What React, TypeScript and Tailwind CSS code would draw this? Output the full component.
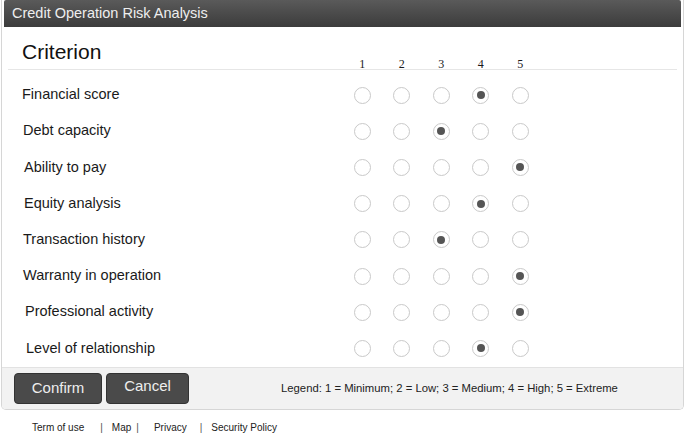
import React from 'react';

const criteria: { label: string; value: number; indent: string }[] = [
    { label: 'Financial score', value: 4, indent: 'pl-[14px]' },
    { label: 'Debt capacity', value: 3, indent: 'pl-[15px]' },
    { label: 'Ability to pay', value: 5, indent: 'pl-[16px]' },
    { label: 'Equity analysis', value: 4, indent: 'pl-[16px]' },
    { label: 'Transaction history', value: 3, indent: 'pl-[15px]' },
    { label: 'Warranty in operation', value: 5, indent: 'pl-[15px]' },
    { label: 'Professional activity', value: 5, indent: 'pl-[17px]' },
    { label: 'Level of relationship', value: 4, indent: 'pl-[18px]' },
];

const cols = [1, 2, 3, 4, 5];

function Radio({ checked }: { checked: boolean }) {
    return (
        <span className="w-[17px] h-[17px] rounded-full border border-[#c9c9c9] bg-white flex items-center justify-center">
            {checked && <span className="w-[8px] h-[8px] rounded-full bg-[#555]" />}
        </span>
    );
}

export default function App() {
    return (
        <div className="w-[685px] h-[434px] bg-white font-['Liberation_Sans',Arial,sans-serif] text-[#1a1a1a]">
            <div className="mx-[1px] border-x border-b border-[#d6d6d6] rounded-b-[5px] overflow-hidden">
                <div className="mx-[2px] h-[27px] bg-gradient-to-b from-[#5a5a5a] to-[#3c3c3c] rounded-t-[2px] flex items-center pl-[8px] text-[14.5px] text-[#eee]">
                    Credit Operation Risk Analysis
                </div>
                <div className="flex items-end h-[43px] mx-[6px] border-b border-[#e6e6e6]">
                    <div className="text-[21px] pl-[14px] pb-[2px] text-[#111]">Criterion</div>
                    <div className="ml-auto mr-[137px] flex leading-none -mb-[1px] font-['Liberation_Serif',serif] text-[12px]">
                        {cols.map((c) => (
                            <span key={c} className="w-[39.5px] text-center">
                                {c}
                            </span>
                        ))}
                    </div>
                </div>
                <div className="pt-[7px] flex flex-col">
                    {criteria.map((row) => (
                        <div key={row.label} className="h-[36.2px] flex items-center mx-[6px]">
                            <div className={`flex-1 text-[14.5px] ${row.indent}`}>{row.label}</div>
                            <div className="flex mr-[137px]">
                                {cols.map((c) => (
                                    <span key={c} className="w-[39.5px] flex justify-center">
                                        <Radio checked={row.value === c} />
                                    </span>
                                ))}
                            </div>
                        </div>
                    ))}
                </div>
                <div className="h-[42px] bg-[#f2f2f2] border-t border-[#e2e2e2] flex items-center px-[12px]">
                    <button className="w-[88px] h-[31px] rounded-[4px] bg-[#4a4a4a] border border-[#333] text-[#eee] text-[15px]">
                        Confirm
                    </button>
                    <button className="ml-[4px] w-[83px] h-[31px] rounded-[4px] bg-[#4a4a4a] border border-[#333] text-[#eee] text-[15px] pb-[4px]">
                        Cancel
                    </button>
                    <div className="ml-[92px] text-[11.3px] text-[#222]">
                        Legend: 1 = Minimum; 2 = Low; 3 = Medium; 4 = High; 5 = Extreme
                    </div>
                </div>
            </div>
            <div className="flex items-center text-[10px] text-[#222] pl-[32px] pt-[10px]">
                <span>Term of use</span>
                <span className="ml-[16px] text-[#555]">|</span>
                <span className="ml-[9px]">Map</span>
                <span className="ml-[5px] text-[#555]">|</span>
                <span className="ml-[15px]">Privacy</span>
                <span className="ml-[13px] text-[#555]">|</span>
                <span className="ml-[9px]">Security Policy</span>
            </div>
        </div>
    );
}
